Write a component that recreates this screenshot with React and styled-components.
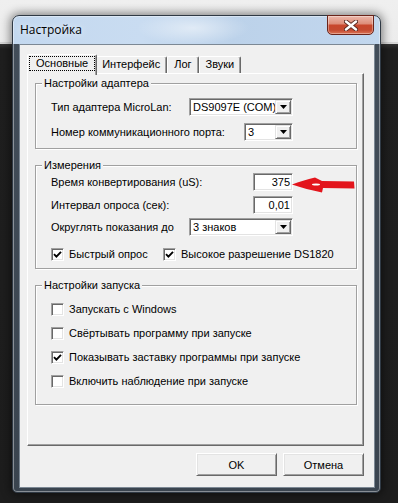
import React from "react";
import styled, { createGlobalStyle } from "styled-components";

const Global = createGlobalStyle`
  html, body { margin: 0; padding: 0; }
  body {
    background: #1d1d1d;
    font-family: "Liberation Sans", Arial, sans-serif;
    font-size: 11px;
    color: #000;
  }
  * { box-sizing: border-box; }
`;

const Desktop = styled.div`
  width: 398px;
  height: 503px;
  overflow: hidden;
  padding: 15px 0 0 12px;
  background: linear-gradient(
    to bottom,
    #efefef 0,
    #ececec 42px,
    #d2d2d2 42px,
    #d9d9d9 44px,
    #343434 44px,
    #1f1f1f 49px,
    #1d1d1d 100%
  );
`;

const Window = styled.div`
  width: 369px;
  height: 478px;
  display: flex;
  flex-direction: column;
  padding: 0 5px 4px 6px;
  border: 1px solid #2f3944;
  border-radius: 7px 7px 5px 5px;
  background:
    radial-gradient(ellipse 80px 24px at 180px 12px, rgba(255, 255, 255, 0.5), rgba(255, 255, 255, 0) 70%) no-repeat,
    linear-gradient(to right, #c3d8ef 0, #c9dcf1 35%, #bcd2ea 60%, #c2d7ee 100%) top / 100% 28px no-repeat,
    linear-gradient(to bottom, #434e5a 0, #3a444f 100%);
  box-shadow: inset 0 0 0 1px rgba(255, 255, 255, 0.4), 0 0 10px 2px rgba(0, 0, 0, 0.45);
`;

const TitleBar = styled.div`
  height: 28px;
  flex-shrink: 0;
  display: flex;
  align-items: flex-start;
`;

const Caption = styled.span`
  flex: 1;
  margin-top: 6px;
  padding-left: 1px;
  font-family: "Open Sans", "Noto Sans", sans-serif;
  font-size: 12px;
  line-height: 16px;
  color: #000;
  text-shadow: 0 0 6px rgba(255, 255, 255, 0.9);
`;

const CloseButton = styled.div`
  width: 47px;
  height: 20px;
  margin-top: -1px;
  margin-right: 1px;
  border: 1px solid #6a241a;
  border-radius: 0 0 5px 5px;
  background: linear-gradient(to bottom, #ecb7aa 0%, #de8f7b 42%, #c8472d 52%, #c44a30 78%, #dc7456 100%);
  box-shadow: inset 0 0 0 1px rgba(255, 255, 255, 0.35);
  display: flex;
  align-items: center;
  justify-content: center;
`;

const Client = styled.div`
  flex: 1;
  display: flex;
  flex-direction: column;
  background: #f0f0f0;
  border: 1px solid #7c8894;
  padding: 9px 10px 11px 7px;
`;

const TabStrip = styled.div`
  height: 19px;
  display: flex;
  align-items: flex-end;
  padding-left: 2px;
  position: relative;
  z-index: 1;
`;

const Tab = styled.div`
  height: ${(p) => (p.$active ? 21 : 17)}px;
  margin: 0 ${(p) => (p.$active ? -2 : 0)}px ${(p) => (p.$active ? -2 : 0)}px;
  padding: ${(p) => (p.$active ? "1px 1px 0 1px" : "0")};
  background: #f0f0f0;
  border-top: 1px solid #fff;
  border-left: 1px solid #fff;
  border-right: 1px solid #696969;
  border-radius: 2px 2px 0 0;
  box-shadow: inset -1px 0 #a0a0a0;
  position: relative;
  z-index: ${(p) => (p.$active ? 2 : 1)};
`;

const TabLabel = styled.span`
  display: block;
  line-height: 13px;
  padding: 0 ${(p) => (p.$focus ? 6 : 5)}px;
  border: 1px dotted ${(p) => (p.$focus ? "#000" : "transparent")};
  white-space: nowrap;
`;

const Panel = styled.div`
  height: 373px;
  border-top: 1px solid #fff;
  border-left: 1px solid #fff;
  border-right: 1px solid #696969;
  border-bottom: 1px solid #696969;
  box-shadow: inset -1px -1px #a0a0a0;
  padding: 9px 6px 0 7px;
  display: flex;
  flex-direction: column;
  gap: 16px;
`;

const GroupBox = styled.div`
  position: relative;
  border: 1px solid #a0a0a0;
  box-shadow: inset 1px 1px #fff, 1px 1px #fff;
  padding: ${(p) => p.$pad};
  display: flex;
  flex-direction: column;
`;

const GroupTitle = styled.span`
  position: absolute;
  top: -7px;
  left: 6px;
  padding: 0 2px;
  line-height: 13px;
  background: #f0f0f0;
  white-space: nowrap;
`;

const Row = styled.div`
  height: 18px;
  margin-top: ${(p) => p.$mt || 0}px;
  display: flex;
  align-items: center;
  padding: 0 63px 0 15px;
  white-space: nowrap;
`;

const sunken = `
  border: 1px solid;
  border-color: #a0a0a0 #fff #fff #a0a0a0;
  box-shadow: inset 1px 1px #696969, inset -1px -1px #e3e3e3;
  background: #fff;
`;

const Combo = styled.div`
  ${sunken}
  width: ${(p) => p.$w}px;
  height: 18px;
  margin-left: auto;
  padding: 1px;
  display: flex;
  align-items: stretch;
`;

const ComboValue = styled.span`
  flex: 1;
  padding-left: 2px;
  line-height: 14px;
  overflow: hidden;
  white-space: nowrap;
`;

const DropButton = styled.span`
  width: 16px;
  flex-shrink: 0;
  background: #f0f0f0;
  border: 1px solid;
  border-color: #e3e3e3 #696969 #696969 #e3e3e3;
  box-shadow: inset 1px 1px #fff, inset -1px -1px #a0a0a0;
  display: flex;
  align-items: center;
  justify-content: center;
`;

const Edit = styled.div`
  ${sunken}
  position: relative;
  width: 40px;
  height: 18px;
  margin-left: auto;
  padding: 0 2px;
  line-height: 16px;
  text-align: right;
`;

const Arrow = styled.svg`
  position: absolute;
  left: 100%;
  top: 2px;
  width: 63px;
  height: 17px;
  overflow: visible;
`;

const CheckItem = styled.span`
  display: flex;
  align-items: center;
  gap: 5px;
  width: ${(p) => (p.$w ? `${p.$w}px` : "auto")};
  flex-shrink: 0;
`;

const CheckBox = styled.span`
  ${sunken}
  width: 13px;
  height: 13px;
  display: flex;
  align-items: center;
  justify-content: center;
`;

const ButtonRow = styled.div`
  margin-top: 7px;
  display: flex;
  justify-content: flex-end;
  gap: 6px;
`;

const Button = styled.button`
  width: 81px;
  height: 23px;
  padding: 0;
  font-family: inherit;
  font-size: 11px;
  color: #000;
  background: #f0f0f0;
  border: 1px solid;
  border-color: #fff #696969 #696969 #fff;
  box-shadow: inset 1px 1px #e3e3e3, inset -1px -1px #a0a0a0;
  border-radius: 0;
`;

const DownArrow = () => (
  <svg width="7" height="4" viewBox="0 0 7 4">
    <path d="M0 0H7L3.5 4Z" fill="#000" />
  </svg>
);

const Check = ({ checked, label, w }) => (
  <CheckItem $w={w}>
    <CheckBox>
      {checked && (
        <svg width="9" height="9" viewBox="0 0 9 9">
          <path d="M1 4.2L3.4 6.6L8 1.8" fill="none" stroke="#000" strokeWidth="1.9" />
        </svg>
      )}
    </CheckBox>
    {label}
  </CheckItem>
);

const Select = ({ w, value }) => (
  <Combo $w={w}>
    <ComboValue>{value}</ComboValue>
    <DropButton>
      <DownArrow />
    </DropButton>
  </Combo>
);

export default function App() {
  return (
    <>
      <Global />
      <Desktop>
        <Window>
          <TitleBar>
            <Caption>Настройка</Caption>
            <CloseButton>
              <svg width="14" height="11" viewBox="0 0 14 11">
                <path d="M2 1.5L12 9.5M12 1.5L2 9.5" stroke="#5a2a22" strokeWidth="4.2" strokeLinecap="round" />
                <path d="M2 1.5L12 9.5M12 1.5L2 9.5" stroke="#fff" strokeWidth="2.4" strokeLinecap="round" />
              </svg>
            </CloseButton>
          </TitleBar>
          <Client>
            <TabStrip>
              <Tab $active>
                <TabLabel $focus>Основные</TabLabel>
              </Tab>
              <Tab>
                <TabLabel>Интерфейс</TabLabel>
              </Tab>
              <Tab>
                <TabLabel>Лог</TabLabel>
              </Tab>
              <Tab>
                <TabLabel>Звуки</TabLabel>
              </Tab>
            </TabStrip>
            <Panel>
              <GroupBox $pad="14px 0 7px">
                <GroupTitle>Настройки адаптера</GroupTitle>
                <Row>
                  Тип адаптера MicroLan:
                  <Select w={104} value="DS9097E (COM)" />
                </Row>
                <Row $mt={7}>
                  Номер коммуникационного порта:
                  <Select w={49} value="3" />
                </Row>
              </GroupBox>
              <GroupBox $pad="7px 0 5px">
                <GroupTitle>Измерения</GroupTitle>
                <Row>
                  Время конвертирования (uS):
                  <Edit>
                    375
                    <Arrow viewBox="0 0 63 17">
                      <path
                        d="M0 8.5C7 6 15 3 23 1.5L25 2.5L30 5L62 5.5L62.5 12.5L31 12L30 16.5C20 14.5 9 11.5 0 8.5Z"
                        fill="#e3151c"
                      />
                      <ellipse cx="24" cy="8.5" rx="4" ry="1.1" fill="#fff" />
                    </Arrow>
                  </Edit>
                </Row>
                <Row $mt={5}>
                  Интервал опроса (сек):
                  <Edit>0,01</Edit>
                </Row>
                <Row $mt={4}>
                  Округлять показания до
                  <Select w={104} value="3 знаков" />
                </Row>
                <Row $mt={9}>
                  <Check checked w={112} label="Быстрый опрос" />
                  <Check checked label="Высокое разрешение DS1820" />
                </Row>
              </GroupBox>
              <GroupBox $pad="14px 0 14px">
                <GroupTitle>Настройки запуска</GroupTitle>
                <Row>
                  <Check label="Запускать с Windows" />
                </Row>
                <Row $mt={6}>
                  <Check label="Свёртывать программу при запуске" />
                </Row>
                <Row $mt={6}>
                  <Check checked label="Показывать заставку программы при запуске" />
                </Row>
                <Row $mt={6}>
                  <Check label="Включить наблюдение при запуске" />
                </Row>
              </GroupBox>
            </Panel>
            <ButtonRow>
              <Button>OK</Button>
              <Button>Отмена</Button>
            </ButtonRow>
          </Client>
        </Window>
      </Desktop>
    </>
  );
}
